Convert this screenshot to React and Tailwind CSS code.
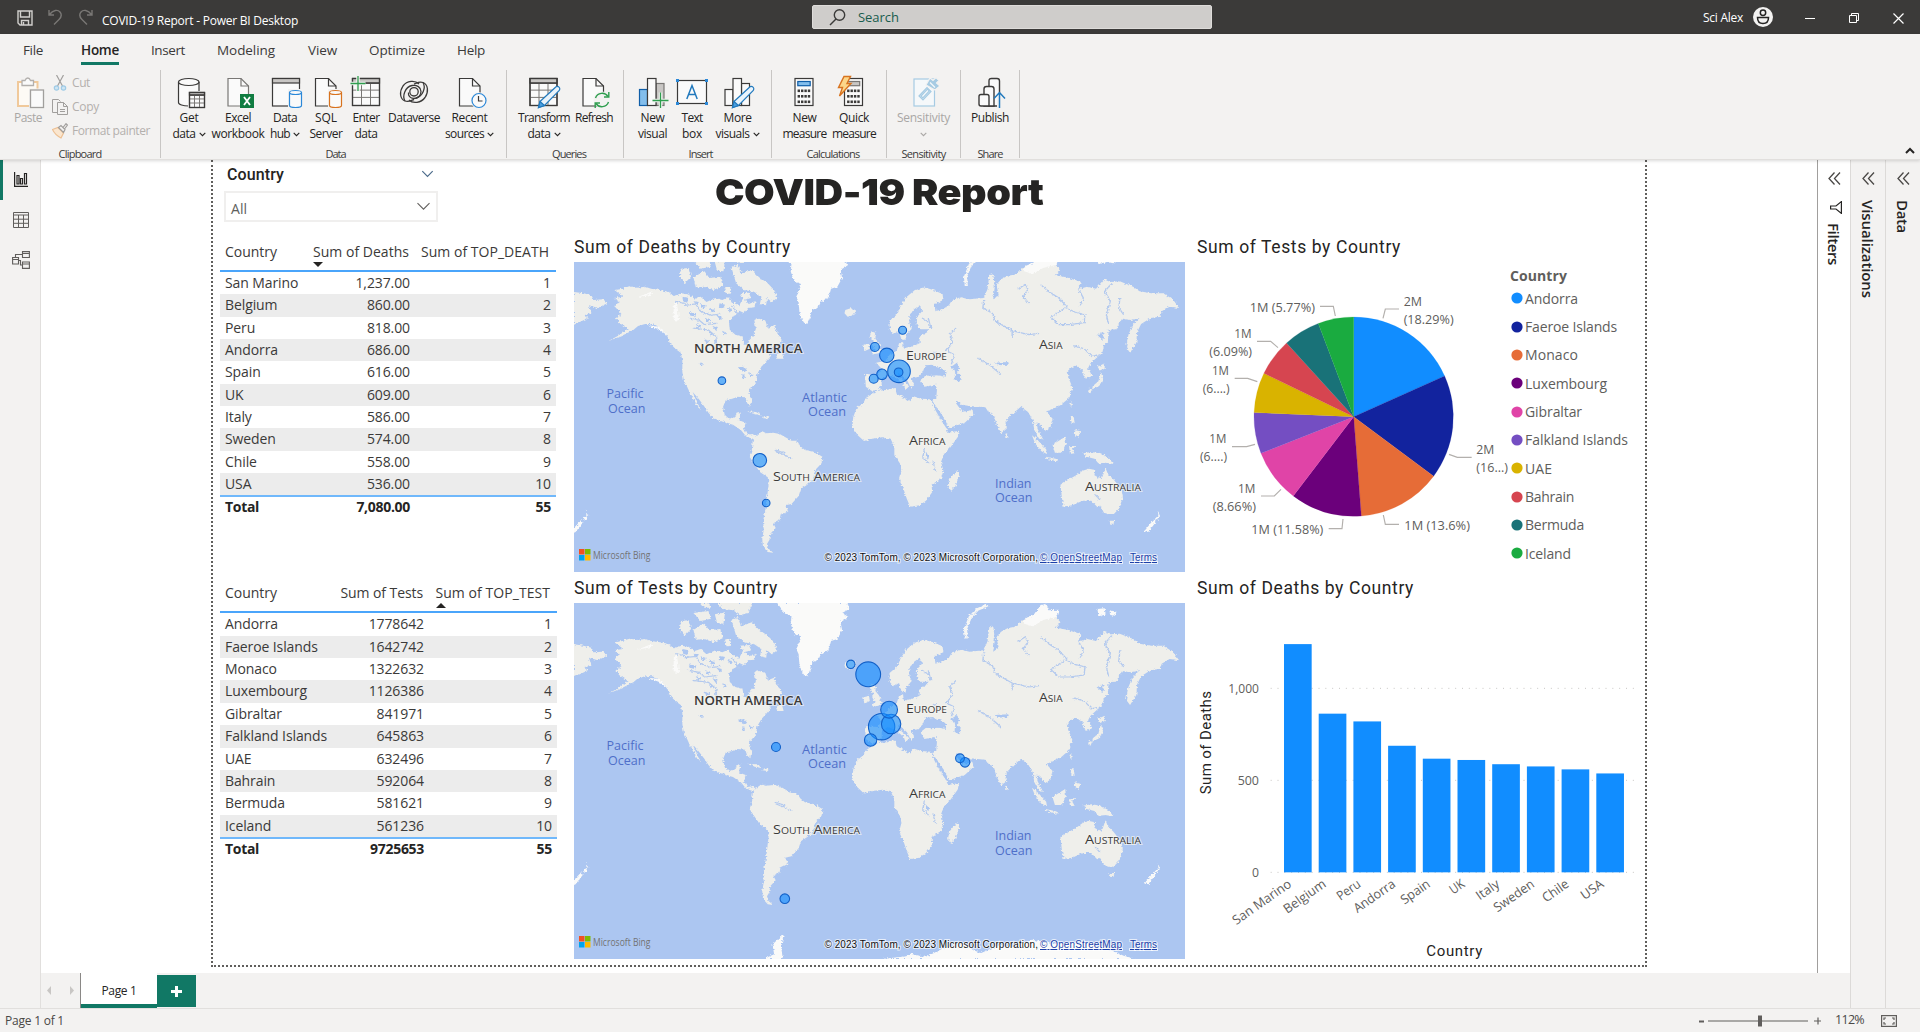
import React, { useLayoutEffect, useRef } from "react";

// Text set to a given width by spreading the difference over its letters.
function Fit({ w, children, className = "" }) {
  const ref = useRef(null);
  useLayoutEffect(() => {
    const el = ref.current;
    el.style.letterSpacing = "0px";
    const vertical = getComputedStyle(el).writingMode !== "horizontal-tb";
    const box = el.getBoundingClientRect();
    const size = vertical ? box.height : box.width;
    el.style.letterSpacing = `${(w - size) / String(children).length}px`;
  }, [w, children]);
  return (
    <span ref={ref} className={`inline-block whitespace-nowrap ${className}`}>
      {children}
    </span>
  );
}

const Chevron = ({ className = "w-[8px] h-[5px]", sw = 1.6 }) => (
  <svg viewBox="0 0 10 6" className={className} fill="none" stroke="currentColor" strokeWidth={sw}>
    <path d="M1 .8 5 4.8 9 .8" />
  </svg>
);

/* ---------- ribbon icons ---------- */
const K = "#3b3a39";
const Ico = ({ children }) => (
  <svg width="32" height="32" viewBox="0 0 32 32" className="shrink-0 overflow-visible" fill="none" stroke={K} strokeWidth="1.2">
    {children}
  </svg>
);
const Page = ({ x = 5.5, stroke = K }) => (
  <g transform={`translate(${x} 2.5)`} stroke={stroke}>
    <path d="M0 0H13L20.5 7.5V27.5H0Z" fill="#fafafa" />
    <path d="M13 0V7.5H20.5" />
  </g>
);
const Cyl = ({ x, y, w, h, ry = 2, stroke = K }) => (
  <g stroke={stroke} fill="#fafafa">
    <path d={`M${x} ${y + ry}V${y + h - ry}A${w / 2} ${ry} 0 0 0 ${x + w} ${y + h - ry}V${y + ry}`} />
    <ellipse cx={x + w / 2} cy={y + ry} rx={w / 2} ry={ry} />
  </g>
);
const Grid = ({ x, y, s, n = 3 }) => (
  <g transform={`translate(${x} ${y})`}>
    <rect width={s} height={s} fill="#fafafa" />
    <rect width={s} height={s * 0.17} fill="#c8c6c4" />
    <path
      stroke="#797775"
      strokeWidth="1"
      d={`M${s / n} ${s * 0.17}V${s}M${(2 * s) / n} ${s * 0.17}V${s}M0 ${s * 0.43}H${s}M0 ${s * 0.7}H${s}`}
    />
    <rect width={s} height={s} />
    <path d={`M0 ${s * 0.17}H${s}`} />
  </g>
);
const Pencil = () => (
  <g stroke="#2179bd" strokeWidth="1.2">
    <path d="M12 25.5 27.5 11.2a2.4 2.4 0 0 1 3.6 3.4L16.5 29.5l-6 2Z" fill="#e9f3fb" />
    <path d="M12 25.5 16.5 29.5l-6 2Z" fill="#4ba0e0" />
  </g>
);
const Calc = ({ x, screen }) => (
  <g transform={`translate(${x} 2.5)`}>
    <rect width="18" height="27" fill="#fafafa" />
    <rect x="2.8" y="3" width="12.4" height="4.2" fill={screen} stroke={screen === "#83beec" ? "#0f5ea8" : "#797775"} />
    <g fill={K} stroke="none">
      {[11, 16.5, 22].map((y) => [2.6, 6, 9.4, 12.8].map((cx) => <rect key={`${cx}-${y}`} x={cx} y={y} width="2.4" height="2.6" />))}
    </g>
  </g>
);

const icons = {
  get: (
    <Ico>
      <Cyl x={5.5} y={2.5} w={20.5} h={27.5} ry={3.5} />
      <rect x="15" y="15" width="18" height="18" fill="#f3f2f1" stroke="none" />
      <Grid x={16.5} y={16.5} s={15} />
    </Ico>
  ),
  excel: (
    <Ico>
      <Page x={6} stroke="#797775" />
      <rect x="18" y="18" width="14" height="14" fill="#107c41" stroke="none" />
      <path d="M22 21 28 29M28 21 22 29" stroke="#fff" strokeWidth="1.8" />
    </Ico>
  ),
  hub: (
    <Ico>
      <rect x="3.5" y="2.5" width="27" height="27.5" fill="#fafafa" />
      <rect x="3.5" y="2.5" width="27" height="4.5" fill="#c8c6c4" />
      <rect x="19" y="13" width="15" height="19" fill="#f3f2f1" stroke="none" />
      <Cyl x={20.5} y={14.5} w={12} h={17} stroke="#2b88d8" />
    </Ico>
  ),
  sql: (
    <Ico>
      <Page />
      <rect x="18" y="13" width="15" height="19" fill="#f3f2f1" stroke="none" />
      <Cyl x={19.5} y={14.5} w={12} h={17} stroke="#d8731f" />
    </Ico>
  ),
  enter: (
    <Ico>
      <Grid x={2.5} y={2.5} s={27} />
      <path d="M.5 7.5H15.5M8 0V15" stroke="#f3f2f1" strokeWidth="3.5" />
      <path d="M.5 7.5H15.5M8 0V15" stroke="#2f9e4f" strokeWidth="1.3" />
    </Ico>
  ),
  dataverse: (
    <Ico>
      <g strokeWidth="1.3">
        <path d="M21 8C17 4 9 4.500 5 10c-4 6-3 13 2 15 4 1.500 7-1 9-1.500" />
        <path d="M11 24c4 4 12 3 16-2.500 4-6 3-13-2-15-4-1.500-7 1-9 1.500" />
        <path d="M7 25c-3-5 0-14 7-15.500 5-1 9 2 9 6s-3 7-7 7-6-3-5.500-6" />
        <path d="M25 6.500c3 5 0 14-7 15.500" />
        <circle cx="16" cy="15.800" r="4.200" />
      </g>
    </Ico>
  ),
  recent: (
    <Ico>
      <Page />
      <circle cx="25" cy="24.500" r="8.300" fill="#f3f2f1" stroke="none" />
      <circle cx="25" cy="24.500" r="7" fill="#fafafa" stroke="#2b88d8" />
      <path d="M24.500 20V25H28.500" />
    </Ico>
  ),
  transform: (
    <Ico>
      <Grid x={2} y={2.5} s={27} />
      <Pencil />
    </Ico>
  ),
  refresh: (
    <Ico>
      <Page x={5} />
      <circle cx="24" cy="24" r="8.500" fill="#f3f2f1" stroke="none" />
      <g stroke="#2f9e4f" strokeWidth="1.4">
        <path d="M17.500 22A7 7 0 0 1 30 20.500M30.500 26A7 7 0 0 1 18 27.500" />
        <path d="M30.800 16V21H26M17.200 32V27H22" />
      </g>
    </Ico>
  ),
  visual: (
    <Ico>
      <rect x="2.500" y="13.500" width="8" height="16" fill="#83beec" stroke="#0f5ea8" />
      <rect x="19" y="7.500" width="8" height="22" fill="#c8c6c4" stroke="#797775" />
      <rect x="10.500" y="2.500" width="8.500" height="27" fill="#fafafa" />
      <path d="M15.500 24.500H31.500M23.500 16.500V32" stroke="#f3f2f1" strokeWidth="3.500" />
      <path d="M15.500 24.500H31.500M23.500 16.500V32" stroke="#2f9e4f" strokeWidth="1.300" />
    </Ico>
  ),
  textbox: (
    <Ico>
      <rect x="1.500" y="4.500" width="29" height="23" fill="#fafafa" />
      <g fill="#2b88d8" stroke="none">
        <rect x="0" y="3" width="3" height="3" />
        <rect x="29" y="3" width="3" height="3" />
        <rect x="0" y="26" width="3" height="3" />
        <rect x="29" y="26" width="3" height="3" />
      </g>
      <path d="M10.800 23 16 9.500 21.200 23M12.500 18.500H19.500" stroke="#2179bd" strokeWidth="1.500" />
    </Ico>
  ),
  more: (
    <Ico>
      <g fill="#fafafa">
        <rect x="3" y="13.500" width="8" height="16" />
        <rect x="19.500" y="7.500" width="8" height="22" />
        <rect x="11" y="2.500" width="8.500" height="27" />
      </g>
      <Pencil />
    </Ico>
  ),
  measure: (
    <Ico>
      <Calc x={6} screen="#83beec" />
    </Ico>
  ),
  quick: (
    <Ico>
      <Calc x={6.5} screen="#c8c6c4" />
      <path d="M6 .5 12.500 .5 9 7.500H13L1.500 20 4.500 11.500H.5Z" fill="#fcd78a" stroke="#d8731f" strokeWidth="1.400" />
    </Ico>
  ),
  sensitivity: (
    <Ico>
      <g stroke="#a6cbe3" fill="#f5f8fa">
        <rect x="6" y="3" width="20.500" height="27" />
        <path d="M11 20 19 11.500 23 15.500 15 24Z" fill="#dcebf5" />
        <path d="M13 20 19.500 13.200 21.300 15 14.800 21.800Z" fill="#f5f8fa" />
        <path d="M18 9 22 2 25 4.500 28 1.500 31 4.500 28.500 7 32 10 27 14Z" fill="#a6cbe3" stroke="#f3f2f1" />
        <path d="M22 6.500 27 11.500" stroke="#f5f8fa" />
      </g>
    </Ico>
  ),
  publish: (
    <Ico>
      <g fill="#fafafa" strokeWidth="1.400">
        <path d="M15 30V5q0-2.500 2.500-2.500h5.500q2.500 0 2.500 2.500V30Z" />
        <path d="M10 30V13q0-2.500 2.500-2.500h5q2.500 0 2.500 2.500V30Z" />
        <path d="M5 28V20.500q0-2 2-2h6q2 0 2 2V30H7q-2 0-2-2Z" />
      </g>
      <path d="M25.500 32V17" stroke="#f3f2f1" strokeWidth="5" />
      <path d="M25.500 32V17M20 22.500 25.500 16.500 31 22.500" stroke="#2179bd" strokeWidth="1.500" />
    </Ico>
  ),
};

function Tool({ icon, l1, w1, l2, w2, chev, cls, dim }) {
  return (
    <div className={`flex h-[82px] flex-col items-center pt-[6px] text-[12px] ${dim ? "text-[#a9a7a5]" : "text-[#252423]"} ${cls}`}>
      {icons[icon]}
      <div className="flex h-4 items-center pt-1">
        <Fit w={w1}>{l1}</Fit>
      </div>
      <div className="flex h-4 items-center gap-[3px] pt-1">
        {l2 && <Fit w={w2}>{l2}</Fit>}
        {chev && <Chevron className="h-[5px] w-[7px]" />}
      </div>
    </div>
  );
}

function Group({ label, lw, cls, children }) {
  return (
    <div className={`flex h-[88px] flex-col border-r border-[#c8c6c4] ${cls}`}>
      <div className="flex h-[78px] shrink-0 text-[#252423]">{children}</div>
      <div className="flex h-3 shrink-0 items-center justify-center text-[#3b3a39]">
        <Fit w={lw} className="text-[11px]">{label}</Fit>
      </div>
    </div>
  );
}

function TitleBar() {
  return (
    <div className="flex h-[34px] items-center bg-[#3b3a39] text-[12px] text-white">
      <div className="flex w-[812px] items-center">
        <svg width="16" height="16" viewBox="0 0 16 16" className="ml-[17px] mt-[2px]" fill="none" stroke="#d2d0ce" strokeWidth="1.400">
          <path d="M1 1H15V15H3L1 13Z" />
          <path d="M3.500 1V7H12.500V1M4.500 15V10.500H11.500V15M6.500 12V15" />
        </svg>
        <svg width="15" height="16" viewBox="0 0 15 16" className="ml-[15px]" fill="none" stroke="#797775" strokeWidth="1.400">
          <path d="M1 1V6H6M1.500 5.500C5 .5 10 .5 12 3s1.500 5-1 7.500L6 15.500" />
        </svg>
        <svg width="15" height="16" viewBox="0 0 15 16" className="ml-[15px]" fill="none" stroke="#797775" strokeWidth="1.400">
          <path d="M14 1V6H9M13.500 5.500C10 .5 5 .5 3 3s-1.500 5 1 7.500L9 15.500" />
        </svg>
        <Fit w={196} className="ml-[9px] mt-[7px]">COVID-19 Report - Power BI Desktop</Fit>
      </div>
      <div className="flex h-6 w-[400px] items-center rounded-[2px] border border-[#dedcda] bg-[#cfcdcb] text-[13px] text-[#185c4d]">
        <svg width="17" height="17" viewBox="0 0 17 17" className="ml-4" fill="none" stroke="#3b3a39" strokeWidth="1.400">
          <circle cx="10.500" cy="6" r="5.200" />
          <path d="M7 10 1 16" />
        </svg>
        <Fit w={41} className="ml-3 mt-px">Search</Fit>
      </div>
      <div className="flex flex-1 items-center justify-end">
        <Fit w={40} className="mt-px">Sci Alex</Fit>
        <svg width="20" height="20" viewBox="0 0 20 20" className="ml-[10px]">
          <circle cx="10" cy="10" r="10" fill="#f3f2f1" />
          <circle cx="10" cy="5.700" r="2.700" fill="none" stroke="#252423" strokeWidth="1.500" />
          <path d="M4.500 10.500H15.500C15.500 14.500 13 16.500 10 16.500S4.500 14.500 4.500 10.500Z" fill="none" stroke="#252423" strokeWidth="1.500" />
        </svg>
        <svg width="10" height="10" viewBox="0 0 10 10" className="ml-8 mt-[2px]" stroke="#fff">
          <path d="M0 5.500H10" />
        </svg>
        <svg width="11" height="11" viewBox="0 0 11 11" className="ml-[34px] mt-[2px]" fill="none" stroke="#fff">
          <path d="M.5 2.500H7.500V9.500H.5ZM2.500 2.500V.5H9.500V7.500H7.500" />
        </svg>
        <svg width="11" height="11" viewBox="0 0 11 11" className="ml-[33px] mr-4 mt-[2px]" stroke="#fff" strokeWidth="1.200">
          <path d="M.5 .5 10.500 10.500M10.500 .5 .5 10.500" />
        </svg>
      </div>
    </div>
  );
}

const tabs = [
  ["File", 20, "ml-[23px]"],
  ["Home", 38, "ml-[38px]"],
  ["Insert", 34, "ml-8"],
  ["Modeling", 58, "ml-8"],
  ["View", 29, "ml-[33px]"],
  ["Optimize", 56, "ml-8"],
  ["Help", 28, "ml-8"],
];

function Ribbon() {
  return (
    <div className="relative z-10 flex h-[126px] flex-col border-b border-[#e1dfdd] bg-[#f3f2f1] shadow-[0_1px_3px_rgba(0,0,0,0.15)]">
      <div className="flex h-[36px] text-[13.500px] text-[#3b3a39]">
        {tabs.map(([t, w, cls]) => (
          <div key={t} className={`flex h-[31px] flex-col items-center justify-between pt-[6px] ${cls}`}>
            <Fit w={w} className={t === "Home" ? "font-semibold text-[#252423]" : ""}>{t}</Fit>
            {t === "Home" && <div className="h-[3px] w-[38px] bg-[#117865]" />}
          </div>
        ))}
      </div>
      <div className="flex items-start">
        <Group label="Clipboard" lw={43} cls="w-[161px]">
          <div className="ml-[14px] flex w-7 flex-col items-center pt-[6px] text-[12px] text-[#a9a7a5]">
            <svg width="28" height="32" viewBox="0 0 28 32" fill="none" strokeWidth="1.300" className="overflow-visible">
              <path d="M4 6H23.500V30H4Z" fill="#fdfaf5" stroke="#f0c99b" strokeWidth="2" />
              <path d="M8 4.500H11Q12 2 13.800 2T16.500 4.500H19.500V9.500H8Z" fill="#fafafa" stroke="#b3b0ad" />
              <rect x="15" y="12.500" width="16" height="20" fill="#f3f2f1" />
              <rect x="16.500" y="14" width="13" height="17.500" fill="#fafafa" stroke="#a19f9d" />
            </svg>
            <div className="flex h-4 items-center pt-1"><Fit w={28}>Paste</Fit></div>
          </div>
          <div className="ml-[10px] flex flex-col pt-px text-[12px] text-[#b3b0ad]">
            <div className="flex h-6 items-center gap-1">
              <svg width="16" height="16" viewBox="0 0 16 16" fill="none" strokeWidth="1.200">
                <path d="M4.500 0 10.500 11M11.500 0 5.500 11" stroke="#a19f9d" />
                <circle cx="4.500" cy="13" r="2.200" stroke="#9fcbe6" fill="#cfe5f3" />
                <circle cx="11.500" cy="13" r="2.200" stroke="#9fcbe6" fill="#cfe5f3" />
              </svg>
              <Fit w={18}>Cut</Fit>
            </div>
            <div className="flex h-6 items-center gap-1">
              <svg width="16" height="16" viewBox="0 0 16 16" fill="none" stroke="#a19f9d">
                <path d="M5 13.500H.5V.5H6.500L8.500 2.500" />
                <path d="M5.500 3.500H11.500L15.500 7.500V15.500H5.500ZM11.500 3.500V7.500H15.500M8 10.500H13M8 12.500H13" />
              </svg>
              <Fit w={27}>Copy</Fit>
            </div>
            <div className="flex h-6 items-center gap-1">
              <svg width="16" height="16" viewBox="0 0 16 16" fill="none" strokeWidth="1.200">
                <path d="M.5 6.500 6 4.500 11.500 10 9 15Q3 12 .5 6.500Z" fill="#fae6cf" stroke="#edc093" />
                <path d="M6.500 4.500 9 2.500 13 6.500 11.500 9.500ZM11 4.500 14 .7 15.500 2 12.500 6" stroke="#a19f9d" fill="#f3f2f1" />
              </svg>
              <Fit w={78}>Format painter</Fit>
            </div>
          </div>
        </Group>
        <Group label="Data" lw={20} cls="w-[346px] pl-1">
          <Tool icon="get" l1="Get" w1={19} l2="data" w2={23} chev cls="w-[48px]" />
          <Tool icon="excel" l1="Excel" w1={26} l2="workbook" w2={53} cls="w-[50px]" />
          <Tool icon="hub" l1="Data" w1={24} l2="hub" w2={20} chev cls="w-[44px]" />
          <Tool icon="sql" l1="SQL" w1={22} l2="Server" w2={33} cls="w-[38px]" />
          <Tool icon="enter" l1="Enter" w1={27} l2="data" w2={23} cls="w-[42px]" />
          <Tool icon="dataverse" l1="Dataverse" w1={52} cls="w-[54px]" />
          <Tool icon="recent" l1="Recent" w1={36} l2="sources" w2={39} chev cls="w-[57px]" />
        </Group>
        <Group label="Queries" lw={34} cls="w-[117px] pl-2">
          <Tool icon="transform" l1="Transform" w1={52} l2="data" w2={23} chev cls="w-[58px]" />
          <Tool icon="refresh" l1="Refresh" w1={38} cls="w-[42px]" />
        </Group>
        <Group label="Insert" lw={24} cls="w-[148px] pl-[6px]">
          <Tool icon="visual" l1="New" w1={24} l2="visual" w2={29} cls="w-[45px]" />
          <Tool icon="textbox" l1="Text" w1={21} l2="box" w2={20} cls="w-[34px]" />
          <Tool icon="more" l1="More" w1={28} l2="visuals" w2={34} chev cls="w-[57px]" />
        </Group>
        <Group label="Calculations" lw={53} cls="w-[115px] pl-2">
          <Tool icon="measure" l1="New" w1={24} l2="measure" w2={44} cls="w-[49px]" />
          <Tool icon="quick" l1="Quick" w1={30} l2="measure" w2={44} cls="w-[50px]" />
        </Group>
        <Group label="Sensitivity" lw={44} cls="w-[74px]">
          <Tool icon="sensitivity" l1="Sensitivity" w1={53} chev dim cls="w-[74px]" />
        </Group>
        <Group label="Share" lw={25} cls="w-[59px]">
          <Tool icon="publish" l1="Publish" w1={38} cls="w-[58px]" />
        </Group>
        <svg width="10" height="7" viewBox="0 0 10 7" className="ml-auto mr-[5px] mt-[77px]" fill="none" stroke="#252423" strokeWidth="2">
          <path d="M1 6 5 2 9 6" />
        </svg>
      </div>
    </div>
  );
}

/* ---------- tables ---------- */
const deathsRows = [
  ["San Marino", "1,237.00"], ["Belgium", "860.00"], ["Peru", "818.00"], ["Andorra", "686.00"], ["Spain", "616.00"],
  ["UK", "609.00"], ["Italy", "586.00"], ["Sweden", "574.00"], ["Chile", "558.00"], ["USA", "536.00"],
];
const testsRows = [
  ["Andorra", "1778642"], ["Faeroe Islands", "1642742"], ["Monaco", "1322632"], ["Luxembourg", "1126386"], ["Gibraltar", "841971"],
  ["Falkland Islands", "645863"], ["UAE", "632496"], ["Bahrain", "592064"], ["Bermuda", "581621"], ["Iceland", "561236"],
];

function DataTable({ rows, h1, w1, h2, w2, total, colA, colB, sort, cls }) {
  return (
    <div className={`text-[14px] leading-[22px] text-[#3b3a39] ${cls}`}>
      <div className="flex h-[34px] border-b-2 border-[#4aa5fb]">
        <div className={`pl-[5px] pt-[3px] ${colA}`}><Fit w={52}>Country</Fit></div>
        <div className={`flex justify-end pr-[6px] pt-[3px] ${colB}`}>
          <div className="relative h-[22px]">
            <Fit w={w1}>{h1}</Fit>
            {sort === 1 && (
              <svg width="10" height="5" viewBox="0 0 10 5" className="absolute left-0 top-[21px]"><path d="M0 0H10L5 5Z" fill="#252423" /></svg>
            )}
          </div>
        </div>
        <div className="flex flex-1 justify-end pr-[7px] pt-[3px]">
          <div className="relative h-[22px]">
            <Fit w={w2}>{h2}</Fit>
            {sort === 2 && (
              <svg width="10" height="5" viewBox="0 0 10 5" className="absolute left-0 top-[21px]"><path d="M0 5H10L5 0Z" fill="#252423" /></svg>
            )}
          </div>
        </div>
      </div>
      {rows.map(([name, v], i) => (
        <div key={name} className={`flex h-[22.350px] tracking-[-0.100px] ${i % 2 ? "bg-[#ececec]" : ""}`}>
          <div className={`whitespace-nowrap pl-[5px] ${colA}`}>{name}</div>
          <div className={`pr-[5px] text-right ${colB}`}>{v}</div>
          <div className="flex-1 pr-[5px] text-right">{i + 1}</div>
        </div>
      ))}
      <div className="flex h-[24px] border-t-2 border-[#70b8fb] font-bold leading-[20px] tracking-[-0.300px] text-[#252423]">
        <div className={`pl-[5px] ${colA}`}>Total</div>
        <div className={`pr-[5px] text-right ${colB}`}>{total}</div>
        <div className="flex-1 pr-[5px] text-right">55</div>
      </div>
    </div>
  );
}

/* ---------- maps ---------- */
const land = [
  // North America
  "M110 240 135 236 112 216 132 212 150 205 168 209 190 206 205 212 228 216 250 222 262 234 282 226 300 230 315 242 330 236 345 252 368 240 385 246 400 238 412 254 428 262 438 240 452 258 470 250 466 268 450 270 440 285 428 278 418 292 408 296 402 312 404 335 418 350 436 356 440 378 450 384 454 366 464 352 470 332 466 306 478 302 494 308 500 330 516 322 526 348 536 364 530 378 512 388 496 392 484 404 500 400 508 414 496 430 484 446 474 466 470 492 452 518 458 545 456 564 448 556 443 538 424 536 410 542 394 546 387 566 391 590 402 602 416 598 424 582 432 584 426 606 444 614 440 632 448 650 462 648 470 656 462 662 446 656 432 636 412 620 388 612 362 600 350 584 340 566 326 544 310 522 322 556 332 576 322 566 306 532 296 506 288 488 284 462 284 428 280 404 266 392 252 374 244 352 228 330 208 318 190 318 172 324 160 336 130 354 96 370 124 352 146 332 124 314 116 300 130 288 112 264 126 252Z",
  // Arctic archipelago
  "M280 152 300 150 306 176 290 196 278 176Z",
  "M312 178 340 160 352 180 380 176 386 204 362 216 340 206 318 208Z",
  "M312 128 350 122 356 146 330 152Z",
  "M366 132 392 126 388 160 372 158Z",
  "M408 148 424 140 432 166 460 156 478 178 500 196 516 216 524 240 510 252 498 240 496 262 480 258 484 236 466 222 440 216 420 196Z",
  "M330 98 350 98 356 112 340 112Z M372 98 460 98 452 128 430 134 412 120 386 116Z",
  "M390 212 404 206 408 226 396 228Z M430 226 452 224 458 240 440 246Z",
  "M520 408 536 404 540 422 524 422Z",
  // Caribbean
  "M448 580 470 582 486 592 480 592 460 586Z M488 594 504 596 500 602 486 600Z",
  // Iceland, Britain, Ireland
  "M696 276 712 270 724 278 716 292 702 296 694 286Z",
  "M762 340 774 346 772 362 782 376 788 398 780 406 762 410 770 394 764 380 768 368 758 356Z M742 380 756 376 758 392 744 400Z",
  // South America
  "M462 668 472 652 486 640 496 646 514 644 530 648 548 660 560 668 574 668 582 684 594 696 618 702 638 716 636 736 620 756 614 784 600 800 584 812 578 834 560 858 544 862 552 880 532 892 530 906 514 916 520 930 506 948 504 966 498 978 502 992 514 1004 500 1002 488 986 486 962 490 934 488 910 494 876 498 840 502 800 500 778 480 762 466 738 454 716 460 694Z",
  // Africa
  "M748 540 764 528 778 518 800 516 822 510 826 528 842 538 860 550 866 534 888 542 912 544 922 572 936 602 950 628 956 644 984 638 980 658 962 688 946 708 938 732 944 758 938 782 914 800 916 822 900 848 884 862 860 866 852 844 844 816 832 784 838 758 834 736 820 712 820 686 812 666 790 658 764 662 744 670 726 650 714 628 716 598 724 572 742 554Z",
  "M966 774 980 756 984 772 974 806 964 818 956 806 958 786Z",
  // Europe and Asia
  "M748 506 746 468 778 470 788 452 774 434 798 428 808 410 826 398 832 376 842 372 844 392 868 384 884 376 884 356 904 342 906 334 884 334 876 318 878 296 890 280 884 262 870 274 858 292 858 316 864 332 852 348 848 364 838 366 832 338 818 348 808 334 808 308 828 288 836 264 850 238 872 216 896 208 918 216 942 228 944 246 922 258 924 280 944 272 958 262 966 246 990 238 1010 244 1046 240 1056 212 1060 172 1070 168 1074 206 1070 244 1084 232 1078 200 1090 184 1106 174 1130 168 1148 146 1172 134 1196 128 1228 140 1240 156 1228 172 1264 180 1292 192 1284 214 1308 206 1330 212 1350 184 1366 192 1390 190 1424 206 1440 220 1470 226 1500 226 1524 244 1540 270 1516 266 1496 280 1492 296 1468 300 1444 318 1434 342 1432 374 1416 404 1406 388 1412 350 1422 322 1440 300 1418 306 1396 302 1380 334 1354 336 1334 352 1352 372 1346 404 1316 436 1310 450 1320 474 1304 482 1296 456 1280 442 1268 448 1256 462 1262 484 1270 508 1262 540 1240 562 1216 576 1204 580 1220 602 1214 628 1202 638 1190 622 1180 612 1182 632 1196 664 1186 662 1174 636 1170 606 1158 582 1140 566 1122 584 1104 606 1104 632 1090 646 1078 616 1070 588 1058 582 1050 568 1010 564 990 560 976 546 976 556 992 582 1018 576 1020 590 998 614 958 630 946 600 928 570 916 548 926 540 928 512 924 500 896 506 886 486 900 472 924 470 950 476 952 462 938 450 926 448 918 440 898 442 892 462 882 476 862 480 870 498 862 510 852 486 832 464 828 474 850 494 858 504 848 516 844 500 822 478 804 470 788 482 788 500 780 516 762 518Z",
  "M1348 336 1362 330 1360 370 1350 384Z",
  // Japan
  "M1334 446 1352 436 1352 452 1340 458Z M1342 462 1348 482 1338 504 1320 514 1322 504 1336 490Z M1312 512 1320 514 1316 526 1310 522Z",
  // South-East Asia
  "M1168 652 1184 668 1204 694 1206 708 1192 700 1176 676Z M1202 716 1234 724 1232 730 1204 722Z M1220 680 1236 668 1252 656 1254 676 1244 704 1226 704Z M1262 684 1278 684 1270 694 1276 706 1264 708Z M1264 596 1274 598 1276 616 1268 614Z M1276 636 1290 640 1286 656 1274 648Z M1268 556 1272 560 1268 570Z",
  "M1298 706 1318 702 1342 706 1362 720 1374 738 1356 734 1336 736 1326 722 1306 716Z",
  // Australia
  "M1240 800 1262 784 1280 772 1296 758 1312 752 1328 756 1326 772 1344 784 1354 750 1360 768 1374 784 1394 814 1398 838 1388 872 1372 892 1350 884 1340 862 1334 868 1318 848 1296 848 1270 862 1248 866 1244 842Z",
  "M1364 908 1376 908 1374 920 1366 920Z",
  // Eastern tip of Siberia at the left edge
  "M10 222 34 226 54 232 60 246 84 244 94 256 70 270 48 262 54 286 36 290 46 300 10 320Z",
  // Ceylon, Taiwan
  "M1102 646 1108 654 1104 662 1100 654Z M1262 558 1268 548 1266 566Z",
].join("");

const snow = [
  "M524 98 702 98 706 116 688 128 704 140 684 156 688 180 676 206 660 212 654 238 634 252 628 268 612 276 606 302 600 318 592 314 586 304 580 282 578 252 572 236 578 222 584 198 566 190 558 160 560 136 542 128Z",
  "M1148 146 1172 134 1190 104 1204 100 1212 120 1236 118 1230 140 1196 150 1170 168 1148 160Z",
  "M1334 116 1352 114 1354 132 1336 140Z M1364 120 1382 124 1378 136 1366 134Z",
  "M1486 878 1492 890 1486 908 1478 904 1488 892Z M1476 904 1480 914 1462 942 1452 940Z",
  "M40 876 46 892 38 908 32 902 42 892Z M28 906 32 914 14 942 10 944 10 930Z",
  "M490 1166 516 1152 512 1122 540 1092 534 1130 538 1166Z",
  "M790 1166 850 1158 860 1150 900 1160 940 1136 980 1120 1000 1124 1020 1140 1040 1148 1080 1126 1120 1130 1168 1108 1230 1120 1300 1118 1350 1130 1400 1156 1430 1166Z",
  "M262 262 270 250 276 308 262 306Z M196 322 226 326 246 352 224 334Z M170 238 208 220 206 230Z",
].join("");

const inlandWater = [
  // Black Sea, Caspian
  "M896 466 904 450 922 446 946 456 950 470 930 472 908 474Z",
  "M964 446 978 434 986 450 978 462 990 478 984 492 972 484 974 464Z",
  // Lakes
  "M424 448 440 446 448 458 438 462Z M436 468 440 466 442 480 436 482Z M452 466 464 472 456 478Z M324 434 336 434 334 444Z M352 270 366 276 360 286Z M330 258 346 264 336 272Z M352 340 360 344 356 356Z M900 706 908 710 906 724 900 720Z M1074 434 1108 432 1110 440 1080 442Z M536 700 546 704 540 708Z",
  // Channels of northern Canada
  "M284 236 300 240 296 254 286 250Z M312 250 326 252 320 262Z M378 256 392 260 386 274 376 268Z M398 270 410 272 404 284Z M300 282 320 286 316 296 302 292Z M340 300 356 304 350 314Z M370 292 384 296 380 306Z M318 318 332 322 326 334Z M360 324 374 328 370 340Z M384 338 396 344 390 352Z M340 364 352 368 346 380Z",
].join("");

const rivers =
  "M290 262 318 258 330 280 356 292 380 288M300 300 326 306 340 320 370 316M310 330 350 336 372 358 366 372 380 386M266 250 290 256M410 262 430 300M1046 246 1044 270 1068 286 1076 310 1118 338 1118 360M1118 338 1160 350 1186 346M1190 200 1212 222 1236 240 1256 266 1216 298 1236 320 1262 320 1300 314 1302 290 1276 282 1256 270M1286 214 1298 240 1290 262M1370 196 1352 220 1366 250 1356 290 1362 318M1390 240 1388 270 1400 290M1132 214 1150 200 1158 214 1146 236 1160 256M976 330 960 350 968 372 952 398 972 410 964 440M1270 382 1300 392 1320 416 1336 410M890 300 904 310M906 300 912 330M896 690 892 720 908 736M918 730 924 760M1030 420 1060 440 1090 470M520 696 540 704M1328 830 1340 846M920 400 940 420M520 700 560 720";

function Land({ id, viewTop, viewH, h }) {
  return (
    <svg width="611" height={h} viewBox={`10 ${viewTop} 1545 ${viewH}`} preserveAspectRatio="none" className="block">
      <defs>
        <filter id={id} x="-2%" y="-2%" width="104%" height="104%">
          <feTurbulence type="fractalNoise" baseFrequency="0.16" numOctaves="3" seed="4" result="n" />
          <feDisplacementMap in="SourceGraphic" in2="n" scale="10" xChannelSelector="R" yChannelSelector="G" />
          <feGaussianBlur stdDeviation="0.400" />
        </filter>
      </defs>
      <rect x="10" y={viewTop} width="1545" height={viewH} fill="#acc6f1" />
      <g filter={`url(#${id})`}>
        <path d={land} fill="#efefeb" />
        <path d={snow} fill="#fafaf9" />
        <path d="M1002 204 1000 176 1012 140 1030 118 1056 104" fill="none" stroke="#f6f6f4" strokeWidth="8" />
        <path d={inlandWater} fill="#acc6f1" />
        <path d={rivers} fill="none" stroke="#b3c9ee" strokeWidth="3.500" />
      </g>
    </svg>
  );
}

const places = [
  ["Europe", 332, 98, 41], ["Asia", 465, 87, 23.5], ["Africa", 335, 183, 36.5],
  ["South America", 199, 219, 87], ["Australia", 511, 229, 56],
];
const oceans = [
  ["Pacific", 32.5, 135.5, 37], ["Ocean", 34, 150.5, 37.5], ["Atlantic", 228, 139.5, 45], ["Ocean", 234, 153.5, 38],
  ["Indian", 421, 225.5, 36.5], ["Ocean", 421, 240, 37.5],
];

function MapVisual({ id, viewTop, h, dy, bubbles }) {
  const b = h - 11;
  return (
    <div className="relative w-[611px]">
      <Land id={id} viewTop={viewTop} viewH={h * 3} h={h} />
      <svg width="611" height={h} viewBox={`0 0 611 ${h}`} className="absolute inset-0">
        <g transform={`translate(0 ${dy})`}>
          <g className="[font-family:'Open_Sans']" fill="#3b3a39" stroke="#f4f4f2" strokeWidth="2" strokeOpacity="0.700" paintOrder="stroke">
            <text x="120" y="90.500" fontSize="13" fontWeight="600" textLength="108.500" lengthAdjust="spacingAndGlyphs">NORTH AMERICA</text>
            {places.map(([t, x, y, w]) => (
              <text key={t} x={x} y={y} fontSize="12.500" textLength={w} lengthAdjust="spacingAndGlyphs" className="[font-variant:small-caps]">{t}</text>
            ))}
          </g>
          <g className="[font-family:'Open_Sans']" fill="#4f6fc9">
            {oceans.map(([t, x, y, w]) => (
              <text key={`${t}${x}`} x={x} y={y} fontSize="12.500" textLength={w} lengthAdjust="spacingAndGlyphs">{t}</text>
            ))}
          </g>
        </g>
        {bubbles.map(([x, y, r]) => (
          <circle key={`${x}-${y}`} cx={x} cy={y} r={r} fill="#118dff" fillOpacity="0.620" stroke="#1260c8" strokeWidth="1.100" />
        ))}
        <g transform={`translate(5 ${b - 12})`}>
          <rect width="5.500" height="5.500" fill="#f25022" />
          <rect x="6" width="5.500" height="5.500" fill="#7fba00" />
          <rect y="6" width="5.500" height="5.500" fill="#00a4ef" />
          <rect x="6" y="6" width="5.500" height="5.500" fill="#ffb900" />
        </g>
        <text x="19" y={b - 2.5} fontSize="10" fill="#737373" textLength="57.500" lengthAdjust="spacingAndGlyphs" fontWeight="500" className="[font-family:'Open_Sans']">Microsoft Bing</text>
        <g className="[font-family:'Liberation_Sans']" fontSize="10" stroke="#ffffff" strokeWidth="2" strokeOpacity="0.700" paintOrder="stroke">
          <text x="250.500" y={b} textLength="213.500" fill="#111">© 2023 TomTom, © 2023 Microsoft Corporation,</text>
          <text x="466" y={b} textLength="82" fill="#1b3fa8" textDecoration="underline">© OpenStreetMap</text>
          <text x="556" y={b} textLength="27" fill="#1b3fa8" textDecoration="underline">Terms</text>
        </g>
      </svg>
    </div>
  );
}

const deathBubbles = [
  [325, 109.3, 11.3], [312.8, 93.3, 7.2], [185.8, 198.3, 6.8], [308, 112.3, 5.3], [299.7, 116.7, 4.5], [300.9, 85, 4.5],
  [324.6, 110.3, 4.3], [328.6, 68.3, 4], [192.2, 241, 3.8], [147.9, 118.7, 3.8],
];
const testBubbles = [
  [307.6, 123.7, 13.2], [294.2, 71.3, 12.4], [317.1, 121, 9.7], [315.1, 106.7, 8.4], [296.6, 137, 6.2], [210.8, 295.7, 4.8],
  [391, 159.3, 4.8], [386, 155.3, 4.4], [202, 144, 4.5], [276.8, 61.3, 4.2],
];

/* ---------- charts ---------- */
const slices = [
  ["Andorra", 18.29, "#118dff"], ["Faeroe Islands", 16.89, "#12239e"], ["Monaco", 13.6, "#e66c37"], ["Luxembourg", 11.58, "#6b007b"],
  ["Gibraltar", 8.66, "#e044a7"], ["Falkland Islands", 6.64, "#744ec2"], ["UAE", 6.5, "#d9b300"], ["Bahrain", 6.09, "#d64550"],
  ["Bermuda", 5.98, "#197278"], ["Iceland", 5.77, "#1aab40"],
];
const legendWidths = [53, 92, 53, 82, 57, 103, 27, 49, 59, 46];

const pieLabels = [
  ["1M (5.77%)", 209, 276, 196], ["2M", 671, 258, 55], ["(18.29%)", 671, 312, 150], ["1M", 163, 354, 52], ["(6.09%)", 88, 408, 128],
  ["1M", 96, 465, 51], ["(6....)", 68, 519, 81], ["1M", 88, 669, 51], ["(6....)", 60, 723, 81], ["1M", 174, 819, 52],
  ["(8.66%)", 98, 873, 130], ["1M (11.58%)", 214, 942, 216], ["1M (13.6%)", 673, 930, 197], ["2M", 889, 702, 54], ["(16...)", 889, 756, 95],
];

function Pie() {
  let a = 0;
  const cx = 521, cy = 590, r = 299;
  return (
    <svg width="320" height="310" viewBox="15 126 960 930" className="shrink-0 overflow-visible [font-family:'Open_Sans']">
      {slices.map(([n, p, c]) => {
        const a0 = (a / 100) * 2 * Math.PI;
        a += p;
        const a1 = (a / 100) * 2 * Math.PI;
        return (
          <path
            key={n}
            fill={c}
            stroke={c}
            strokeWidth="0.600"
            d={`M${cx} ${cy}L${cx + r * Math.sin(a0)} ${cy - r * Math.cos(a0)}A${r} ${r} 0 0 1 ${cx + r * Math.sin(a1)} ${cy - r * Math.cos(a1)}Z`}
          />
        );
      })}
      <path
        fill="none"
        stroke="#b3b0ad"
        strokeWidth="3.500"
        d="M420 259H460L466 288M657 267H616L609 295M231 364H272L294 383M164 475H203L232 485M156 680H200L225 673M243 828H283L303 808M446 926H486L489 897M657 913H616L610 885M875 712H832L807 703"
      />
      {pieLabels.map(([t, x, y, w]) => (
        <text key={`${x}-${y}`} x={x} y={y} fontSize="37" fill="#605e5c" textLength={w} lengthAdjust="spacingAndGlyphs">{t}</text>
      ))}
    </svg>
  );
}

const bars = [
  ["San Marino", 1237, 205], ["Belgium", 860, 146], ["Peru", 818, 78], ["Andorra", 686, 143], ["Spain", 616, 98],
  ["UK", 609, 46], ["Italy", 586, 76], ["Sweden", 574, 138], ["Chile", 558, 88], ["USA", 536, 74],
];

function BarChart() {
  return (
    <svg width="460" height="356" viewBox="15 99 1380 1068" className="block">
      <path d="M272 355H1365M272 631H1365M272 907H1365" fill="none" stroke="#c8c6c4" strokeWidth="3" strokeDasharray="3 17.500" />
      {bars.map(([n, v], i) => (
        <rect key={n} x={312 + i * 104.1} y={907 - v * 0.5535} width="83" height={v * 0.5535} fill="#118dff" />
      ))}
      <g className="[font-family:'Open_Sans']" fill="#605e5c" fontSize="38">
        <text x="145" y="368" textLength="92" lengthAdjust="spacingAndGlyphs">1,000</text>
        <text x="173" y="644" textLength="64" lengthAdjust="spacingAndGlyphs">500</text>
        <text x="216" y="920" textLength="21" lengthAdjust="spacingAndGlyphs">0</text>
        {bars.map(([n, , w], i) => (
          <text key={n} transform={`translate(${337 + i * 104.1} 948) rotate(-35)`} x={-w} fontSize="39" textLength={w} lengthAdjust="spacingAndGlyphs">{n}</text>
        ))}
      </g>
      <g className="[font-family:Roboto]" fill="#252423" fontSize="45">
        <text transform="translate(93 673) rotate(-90)" textLength="310">Sum of Deaths</text>
        <text x="739" y="1158" textLength="168">Country</text>
      </g>
    </svg>
  );
}

const VisualTitle = ({ w, children }) => (
  <div className="flex h-[31px] items-end pb-[4px] font-[Roboto] text-[17.500px] leading-[22px] text-[#252423]">
    <Fit w={w}>{children}</Fit>
  </div>
);

function Report() {
  return (
    <div className="flex h-[807px] w-[1436px] border-b-2 border-l-2 border-r-2 border-dotted border-[#605e5c]">
      <div className="flex w-[361px] shrink-0 flex-col">
        <div className="flex h-[31px] items-center justify-between pl-[14px] pr-[140px] font-[Roboto] text-[16px] font-medium leading-[20px] text-[#252423]">
          <Fit w={57} className="-mt-[1px]">Country</Fit>
          <Chevron className="-mt-[4px] h-[8px] w-[13px] text-[#4a6a8a]" sw={0.9} />
        </div>
        <div className="ml-[11px] flex h-[31px] w-[214px] items-center justify-between border-2 border-[#f0efee] pl-[5px] pr-[5px] text-[14px] text-[#605e5c]">
          <Fit w={16} className="mt-[3px]">All</Fit>
          <Chevron className="h-[9px] w-[15px]" sw={0.7} />
        </div>
        <DataTable rows={deathsRows} h1="Sum of Deaths" w1={96} h2="Sum of TOP_DEATH" w2={128} total="7,080.00" colA="w-[90px]" colB="w-[105px]" sort={1} cls="ml-[7px] mt-[16px] w-[336px]" />
        <DataTable rows={testsRows} h1="Sum of Tests" w1={82.5} h2="Sum of TOP_TEST" w2={114.5} total="9725653" colA="w-[103px]" colB="w-[106px]" sort={2} cls="ml-[7px] mt-[60px] w-[337px]" />
      </div>
      <div className="flex w-[1071px] shrink-0 flex-col">
        <div className="flex h-[71px] items-center pl-[141px] font-[Inter] text-[36px] font-black leading-[40px] text-[#252423]">
          <div className="-mt-[7px] origin-left scale-x-[1.1]">
            <Fit w={329}>COVID-19 Report</Fit>
          </div>
        </div>
        <div className="flex">
          <div className="w-[623px] shrink-0">
            <VisualTitle w={217}>Sum of Deaths by Country</VisualTitle>
            <MapVisual id="coastA" viewTop={132} h={310} dy={0} bubbles={deathBubbles} />
            <VisualTitle w={204}>Sum of Tests by Country</VisualTitle>
            <MapVisual id="coastB" viewTop={98} h={356} dy={11.5} bubbles={testBubbles} />
          </div>
          <div className="w-[448px]">
            <VisualTitle w={204}>Sum of Tests by Country</VisualTitle>
            <div className="-ml-3 flex">
              <Pie />
              <div className="ml-[5px] pt-[3px] text-[14px] text-[#605e5c]">
                <div className="h-[19px] leading-[21px]"><Fit w={57} className="font-bold">Country</Fit></div>
                {slices.map(([n, , c], i) => (
                  <div key={n} className="flex h-[28.350px] items-center gap-[2px]">
                    <svg width="12" height="12" viewBox="0 0 12 12" className="ml-px"><circle cx="6" cy="6" r="5.600" fill={c} /></svg>
                    <Fit w={legendWidths[i]}>{n}</Fit>
                  </div>
                ))}
              </div>
            </div>
            <VisualTitle w={217}>Sum of Deaths by Country</VisualTitle>
            <div className="-ml-3"><BarChart /></div>
          </div>
        </div>
      </div>
    </div>
  );
}

function SideNav() {
  return (
    <div className="flex w-[41px] flex-col border-r border-[#e1dfdd] bg-[#f3f2f1]">
      <div className="flex h-[40px] items-center border-l-[3px] border-[#117865] pl-[11px]">
        <svg width="14" height="15" viewBox="0 0 14 15" className="-mt-[1px]" fill="none" stroke="#252423" strokeWidth="1.200">
          <path d="M.6 0V14.400H14M3 12V3.500H5V12ZM6.500 12V6.500H8.500V12ZM10.500 12V1.500H12.500V12Z" />
        </svg>
      </div>
      <svg width="16" height="16" viewBox="0 0 16 16" className="ml-[13px] mt-[12px]" fill="none" stroke="#605e5c">
        <path d="M.5 .5H15.500V15.500H.5ZM.5 3H15.500M.5 7.200H15.500M.5 11.300H15.500M5.500 3V15.500M10.500 3V15.500" />
      </svg>
      <svg width="18" height="18" viewBox="0 0 18 18" className="ml-[12px] mt-[23px]" fill="none" stroke="#605e5c" strokeWidth="1.100">
        <path d="M.6 6.500H6.500V13H.6ZM.6 8.500H6.500M10.500 .6H17.400V6.500H10.500ZM10.500 2.500H17.400M10.500 11H17.400V17.400H10.500ZM10.500 13H17.400M3.500 6.500V3.500H10.500M6.500 9.500H8.500V14H10.500" />
      </svg>
    </div>
  );
}

const DoubleChevron = () => (
  <svg width="13" height="13" viewBox="0 0 13 13" fill="none" stroke="#4a4846" strokeWidth="1.300">
    <path d="M6.500 .5 1 6.500 6.500 12.500M12 .5 6.500 6.500 12 12.500" />
  </svg>
);

function SidePane({ label, w, cls, icon }) {
  return (
    <div className={`flex flex-col items-center border-l pt-[12px] ${cls}`}>
      <DoubleChevron />
      {icon && (
        <svg width="12" height="13" viewBox="0 0 12 13" className="ml-[3px] mt-[16px]" fill="none" stroke="#252423" strokeWidth="1.200">
          <path d="M11.400 .6V12.400L6 8H.6V5H6Z" />
        </svg>
      )}
      <Fit w={w} className={`text-[15px] font-semibold leading-[20px] text-[#252423] [writing-mode:vertical-rl] ${icon ? "mt-[9px]" : "mt-[15px]"}`}>{label}</Fit>
    </div>
  );
}

function PageTabs() {
  return (
    <div className="flex h-[35px] bg-[#f3f2f1]">
      <div className="flex w-[40px] items-center justify-between border-r border-[#8a8886] pl-[6px] pr-[6px]">
        <svg width="4" height="9" viewBox="0 0 4 9"><path d="M4 0V9L0 4.500Z" fill="#c8c6c4" /></svg>
        <svg width="4" height="9" viewBox="0 0 4 9"><path d="M0 0V9L4 4.500Z" fill="#c8c6c4" /></svg>
      </div>
      <div className="flex w-[76px] items-center justify-center border-b-4 border-[#117865] bg-white pt-[5px] text-[12px] text-[#252423]">
        <Fit w={35}>Page 1</Fit>
      </div>
      <div className="mt-[2px] flex h-8 w-[39px] items-center justify-center bg-[#117865]">
        <svg width="11" height="11" viewBox="0 0 11 11" stroke="#fff" strokeWidth="3"><path d="M5.500 0V11M0 5.500H11" /></svg>
      </div>
    </div>
  );
}

function StatusBar() {
  return (
    <div className="flex h-6 items-center border-t border-[#e1dfdd] bg-[#f3f2f1] pl-[5px] text-[12px] text-[#4a4846]">
      <Fit w={59}>Page 1 of 1</Fit>
      <svg width="122" height="12" viewBox="0 0 122 12" className="ml-auto" stroke="#605e5c">
        <path d="M0 6.500H5" strokeWidth="2" />
        <path d="M9 6H109" strokeWidth="1.200" />
        <path d="M61 .5V11.500" strokeWidth="4" />
        <path d="M115 6H122.500M119 2.500V9.500" strokeWidth="1.200" />
      </svg>
      <Fit w={29} className="ml-[14px] text-[12.500px]">112%</Fit>
      <svg width="16" height="12" viewBox="0 0 16 12" className="ml-[17px] mr-[23px]" fill="none" stroke="#605e5c" strokeWidth="1.200">
        <rect x=".6" y=".6" width="14.800" height="10.800" />
        <path d="M3 5V3H5M11 3H13V5M13 7V9H11M5 9H3V7" />
      </svg>
    </div>
  );
}

export default function App() {
  return (
    <div className="flex h-[1032px] w-[1920px] flex-col overflow-hidden bg-white font-['Open_Sans',sans-serif]">
      <TitleBar />
      <Ribbon />
      <div className="flex h-[848px]">
        <SideNav />
        <div className="flex w-[1809px] flex-col">
          <div className="flex h-[813px]">
            <div className="w-[1776px] pl-[170px]">
              <Report />
            </div>
            <SidePane label="Filters" w={42} icon cls="w-[33px] border-[#a19f9d]" />
          </div>
          <PageTabs />
        </div>
        <SidePane label="Visualizations" w={98} cls="w-[35px] border-[#dcdad8] bg-[#f3f2f1]" />
        <SidePane label="Data" w={33} cls="w-[35px] border-[#dcdad8] bg-[#f3f2f1]" />
      </div>
      <StatusBar />
    </div>
  );
}
